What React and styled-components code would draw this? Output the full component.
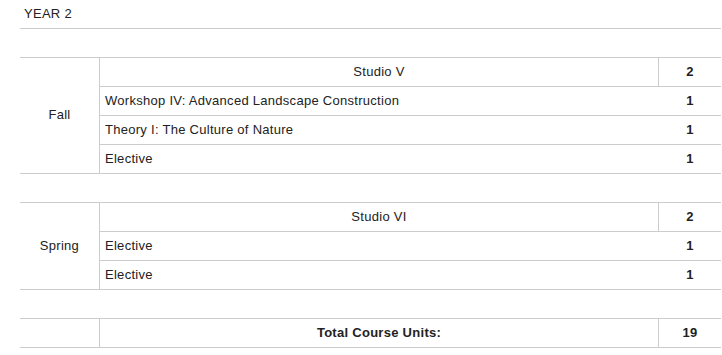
import React from "react";
import styled, { createGlobalStyle } from "styled-components";

const Global = createGlobalStyle`
  html, body { margin: 0; padding: 0; background: #fff; }
  body { font-family: "Liberation Sans", Arial, sans-serif; font-size: 13px; letter-spacing: 0.28px; color: #222; }
  * { box-sizing: border-box; }
`;

const Sheet = styled.div`
  width: 701px;
  margin-left: 20px;
  display: flex;
  flex-direction: column;
`;

const YearRow = styled.div`
  height: 29px;
  padding: 0 4px 2px;
  display: flex;
  align-items: center;
  border-bottom: 1px solid #ccc;
`;

const Spacer = styled.div`
  height: 29px;
  border-bottom: 1px solid #ccc;
`;

const Block = styled.div`
  display: grid;
  grid-template-columns: 80px 1fr;
  border-bottom: 1px solid #ccc;
`;

const Term = styled.div`
  border-right: 1px solid #ccc;
  display: flex;
  align-items: center;
  justify-content: center;
  padding-bottom: 2px;
`;

const Courses = styled.div`
  display: flex;
  flex-direction: column;
`;

const CourseRow = styled.div`
  display: grid;
  grid-template-columns: 1fr 62px;
  height: ${(p) => (p.$last ? "28px" : "29px")};
  border-bottom: ${(p) => (p.$last ? "none" : "1px solid #ccc")};
`;

const Name = styled.div`
  display: flex;
  align-items: center;
  padding: 0 5px 2px;
  justify-content: ${(p) => (p.$center ? "center" : "flex-start")};
  border-right: ${(p) => (p.$divided ? "1px solid #ccc" : "none")};
  font-weight: ${(p) => (p.$bold ? 700 : 400)};
`;

const Units = styled.div`
  display: flex;
  align-items: center;
  justify-content: center;
  padding-bottom: 2px;
  font-weight: 700;
`;

const TotalRow = styled.div`
  display: grid;
  grid-template-columns: 80px 1fr 62px;
  height: 29px;
  border-bottom: 1px solid #ccc;
`;

const Blank = styled.div`
  border-right: 1px solid #ccc;
`;

const terms = [
  {
    term: "Fall",
    lead: { name: "Studio V", units: 2 },
    rest: [
      { name: "Workshop IV: Advanced Landscape Construction", units: 1 },
      { name: "Theory I: The Culture of Nature", units: 1 },
      { name: "Elective", units: 1 },
    ],
  },
  {
    term: "Spring",
    lead: { name: "Studio VI", units: 2 },
    rest: [
      { name: "Elective", units: 1 },
      { name: "Elective", units: 1 },
    ],
  },
];

export default function App() {
  return (
    <>
      <Global />
      <Sheet>
        <YearRow>YEAR 2</YearRow>
        <Spacer />
        {terms.map((t) => (
          <React.Fragment key={t.term}>
            <Block>
              <Term>{t.term}</Term>
              <Courses>
                <CourseRow>
                  <Name $center $divided>{t.lead.name}</Name>
                  <Units>{t.lead.units}</Units>
                </CourseRow>
                {t.rest.map((c, i) => (
                  <CourseRow key={i} $last={i === t.rest.length - 1}>
                    <Name>{c.name}</Name>
                    <Units>{c.units}</Units>
                  </CourseRow>
                ))}
              </Courses>
            </Block>
            <Spacer />
          </React.Fragment>
        ))}
        <TotalRow>
          <Blank />
          <Name $center $divided $bold>Total Course Units:</Name>
          <Units>19</Units>
        </TotalRow>
      </Sheet>
    </>
  );
}
